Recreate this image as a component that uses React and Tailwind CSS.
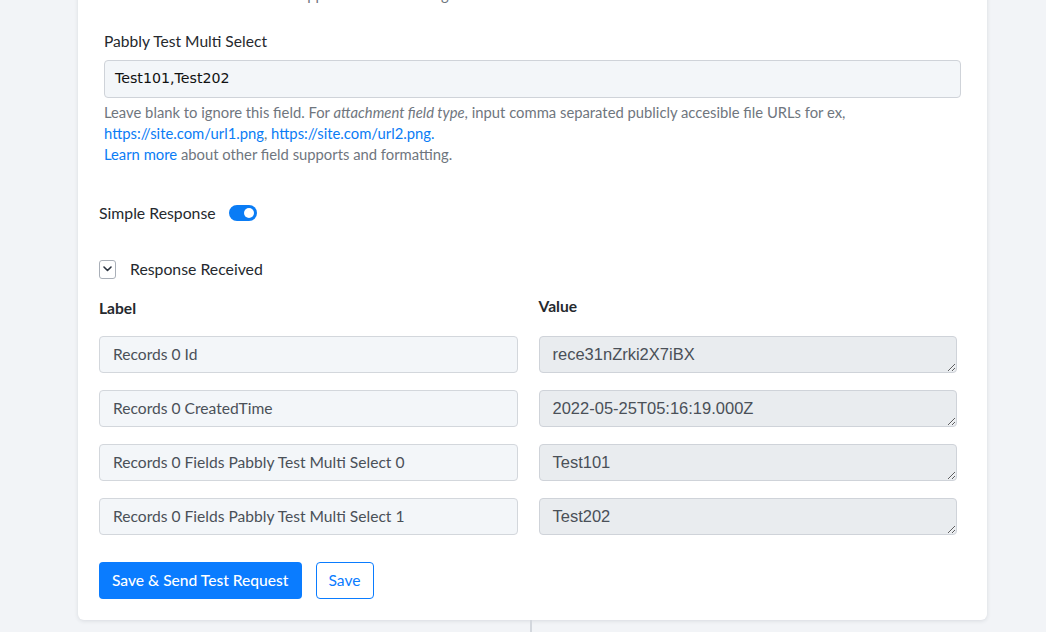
import React from "react";

const rows = [
  { label: "Records 0 Id", value: "rece31nZrki2X7iBX" },
  { label: "Records 0 CreatedTime", value: "2022-05-25T05:16:19.000Z" },
  { label: "Records 0 Fields Pabbly Test Multi Select 0", value: "Test101" },
  { label: "Records 0 Fields Pabbly Test Multi Select 1", value: "Test202" },
];

function Toggle() {
  return (
    <span className="relative inline-flex h-[16px] w-[28px] items-center rounded-full bg-[#0a7cf5]">
      <span className="absolute right-[3px] h-[10px] w-[10px] rounded-full bg-white" />
    </span>
  );
}

function Chevron() {
  return (
    <span className="flex h-[19px] w-[17px] items-center justify-center rounded-[3px] border border-[#a9afb8]">
      <svg width="9" height="6" viewBox="0 0 9 6" fill="none">
        <path d="M1 1l3.5 3.5L8 1" stroke="#2c3440" strokeWidth="1.6" strokeLinecap="round" strokeLinejoin="round" />
      </svg>
    </span>
  );
}

function HelpText() {
  return (
    <div className="mt-[4px] text-[14.8px] leading-[21px] text-[#6f767e]">
      <div>
        Leave blank to ignore this field. For <i>attachment field type</i>, input comma separated publicly accesible file URLs for ex,
      </div>
      <div>
        <span className="text-[#0a7cf5]">https://site.com/url1.png</span>,{" "}
        <span className="text-[#0a7cf5]">https://site.com/url2.png.</span>
      </div>
      <div>
        <span className="text-[#0a7cf5]">Learn more</span> about other field supports and formatting.
      </div>
    </div>
  );
}

export default function App() {
  return (
    <div className="h-[632px] overflow-hidden bg-[#f2f4f7] font-['Lato',sans-serif]">
      <div className="ml-[78px] w-[909px] rounded-b-[6px] bg-white px-[21px] pb-[21px] shadow-[0_1px_4px_rgba(30,40,60,0.12)]">
        {/* tail of the previous field's help text */}
        <div className="mt-[-16px] px-[5px] text-[14.8px] leading-[21px] text-[#6f767e]">
          <span className="text-[#0a7cf5]">Learn more</span> about other field supports and formatting.
        </div>

        <div className="mt-[25px] px-[5px]">
          <div className="text-[15.6px] leading-[22px] text-[#25292e]">Pabbly Test Multi Select</div>
          <div className="mt-[8px] flex h-[38px] items-center rounded-[4px] border border-[#cfd3d9] bg-[#f3f6f9] px-[10px] font-['DejaVu_Sans',sans-serif] text-[14.2px] text-[#111]">
            Test101,Test202
          </div>
          <HelpText />
        </div>

        <div className="mt-[37px] flex items-center gap-[13px]">
          <span className="text-[15.8px] leading-[22px] text-[#25292e]">Simple Response</span>
          <Toggle />
        </div>

        <div className="mt-[34px] flex items-center gap-[14px]">
          <Chevron />
          <span className="text-[15.8px] leading-[22px] text-[#25292e]">Response Received</span>
        </div>

        <div className="mt-[17px] grid grid-cols-2 gap-x-[21px] pr-[9px]">
          <div className="text-[15.6px] font-bold leading-[22px] text-[#25292e]">Label</div>
          <div className="mt-[-2px] text-[15.6px] font-bold leading-[22px] text-[#25292e]">Value</div>
        </div>

        <div className="mt-[17px] grid grid-cols-2 gap-x-[21px] gap-y-[17px] pr-[9px]">
          {rows.map((r) => (
            <React.Fragment key={r.label}>
              <div className="flex h-[37px] items-center rounded-[4px] border border-[#d3d7dc] bg-[#f3f6f9] px-[13px] text-[15.6px] text-[#4a5058]">
                {r.label}
              </div>
              <textarea
                readOnly
                rows={1}
                value={r.value}
                className="block h-[37px] min-h-[37px] rounded-[4px] border border-[#cfd3d9] bg-[#e9ecef] px-[13px] py-[5px] font-['Liberation_Sans',sans-serif] text-[16.5px] leading-[24px] text-[#4a5058] outline-none"
              />
            </React.Fragment>
          ))}
        </div>

        <div className="mt-[27px] flex items-center gap-[14px]">
          <button className="h-[37px] rounded-[4px] bg-[#0a7cff] px-[13px] text-[15.6px] font-medium text-white">
            Save &amp; Send Test Request
          </button>
          <button className="h-[37px] rounded-[4px] border border-[#0a7cff] bg-white px-[12px] text-[15.6px] text-[#0a7cff]">
            Save
          </button>
        </div>
      </div>
      <div className="ml-[530px] h-[13px] w-[2px] bg-[#d3d7dd]" />
    </div>
  );
}
